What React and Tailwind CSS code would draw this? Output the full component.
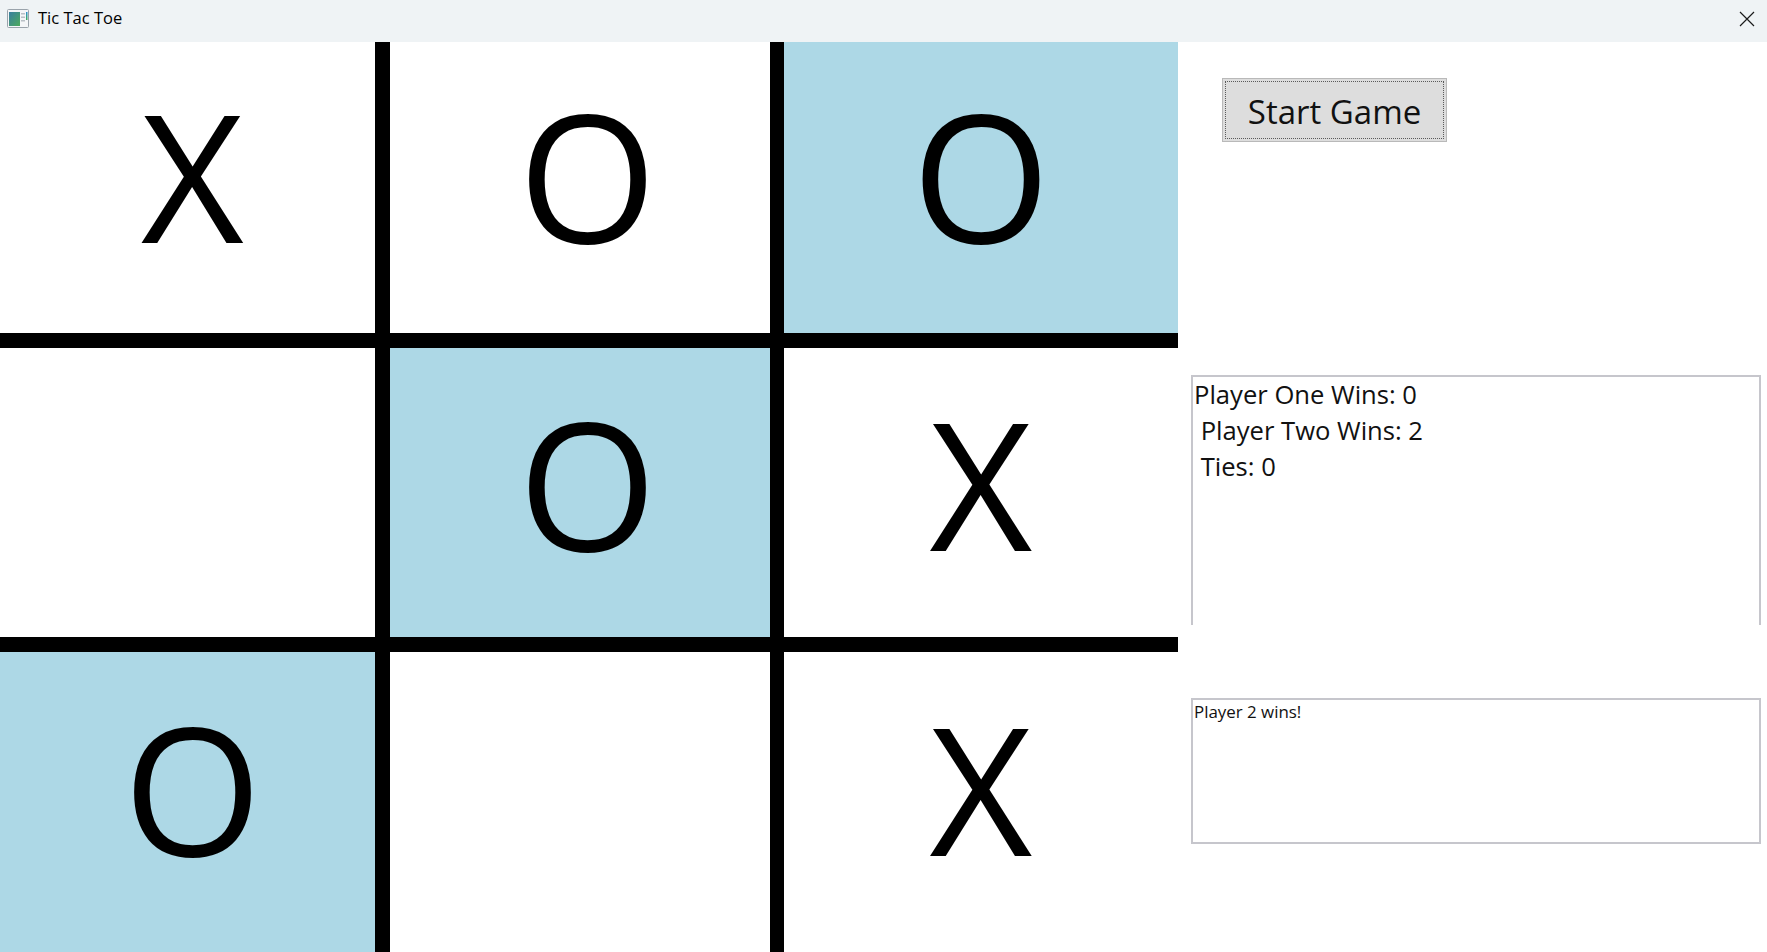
import React from 'react';

const BOARD = [
  ['X', 'O', 'O'],
  ['', 'O', 'X'],
  ['O', '', 'X'],
];

const WINNING_CELLS = ['0-2', '1-1', '2-0'];

// per-row top offset and per-column left nudge of the glyphs
const ROW_PAD = ['pt-[43px]', 'pt-[45px]', 'pt-[46px]'];
const COL_PAD = ['pl-[10px]', 'pl-[16px]', 'pl-0'];

const FONT = { fontFamily: '"Open Sans", "Noto Sans", sans-serif' };

const AppIcon = () => (
  <svg width="22" height="19" viewBox="0 0 22 19" className="shrink-0">
    <defs>
      <linearGradient id="pane" x1="0" y1="0" x2="1" y2="1">
        <stop offset="0" stopColor="#3a7fa0" />
        <stop offset="1" stopColor="#4caa5c" />
      </linearGradient>
      <linearGradient id="bar" x1="0" y1="0" x2="0" y2="1">
        <stop offset="0" stopColor="#2f8fd0" />
        <stop offset="1" stopColor="#3fb05a" />
      </linearGradient>
    </defs>
    <rect x="0.5" y="0.5" width="21" height="18" rx="1" fill="#f4f6f8" stroke="#9aa3ab" />
    <rect x="2" y="3" width="11" height="14" fill="url(#pane)" />
    <rect x="14" y="4" width="4" height="1.5" fill="#b9c0c6" />
    <rect x="14" y="7.5" width="4" height="1.5" fill="#b9c0c6" />
    <rect x="14" y="11" width="4" height="1.5" fill="#b9c0c6" />
    <rect x="19" y="3" width="1.5" height="8" fill="url(#bar)" />
  </svg>
);

const TitleBar = () => (
  <div className="flex h-[42px] shrink-0 items-center bg-[#eff3f5] pb-[5px]">
    <div className="ml-[7px] flex items-center">
      <AppIcon />
      <span className="ml-[9px] text-[16.5px] leading-none text-black" style={FONT}>
        Tic Tac Toe
      </span>
    </div>
    <svg width="16" height="16" viewBox="0 0 16 16" className="ml-auto mr-[12px]">
      <path d="M1 1 L15 15 M15 1 L1 15" stroke="#1b1b1b" strokeWidth="1.2" fill="none" />
    </svg>
  </div>
);

const Board = () => (
  <div className="grid h-[910px] w-[1178px] shrink-0 grid-cols-[375px_380px_394px] grid-rows-[291px_289px_300px] gap-x-[14.5px] gap-y-[15px] bg-black">
    {BOARD.map((row, r) =>
      row.map((mark, c) => (
        <div
          key={`${r}-${c}`}
          className={`flex items-start justify-center ${ROW_PAD[r]} ${COL_PAD[c]} ${
            WINNING_CELLS.includes(`${r}-${c}`) ? 'bg-[#add8e6]' : 'bg-white'
          }`}
        >
          <span className="text-[178px] leading-none text-black" style={FONT}>
            {mark}
          </span>
        </div>
      ))
    )}
  </div>
);

const SidePanel = () => (
  <div className="flex flex-1 flex-col bg-white" style={FONT}>
    <button className="ml-[44px] mt-[36px] flex h-[64px] w-[225px] items-center justify-center border border-[#b9b9b9] bg-[#dddddd] p-[2px]">
      <span className="flex h-full w-full items-center justify-center border border-dotted border-[#5a5a5a] pt-[2px] text-[33px] leading-none text-[#111]">
        Start Game
      </span>
    </button>

    <div className="ml-[13px] mr-[6px] mt-[233px] h-[250px] border-2 border-b-0 border-[#c6c6cc] pl-[1px] text-[25.6px] leading-[36px] text-[#111] whitespace-pre">
      <div>Player One Wins: 0</div>
      <div> Player Two Wins: 2</div>
      <div> Ties: 0</div>
    </div>

    <div className="ml-[13px] mr-[6px] mt-[73px] h-[146px] border-2 border-[#c6c6cc] pl-[1px] text-[16.9px] leading-[24px] text-[#111]">
      Player 2 wins!
    </div>
  </div>
);

const App = () => {
  return (
    <div className="flex h-[952px] w-[1767px] flex-col overflow-hidden bg-white">
      <TitleBar />
      <div className="flex flex-1">
        <Board />
        <SidePanel />
      </div>
    </div>
  );
};

export default App;
